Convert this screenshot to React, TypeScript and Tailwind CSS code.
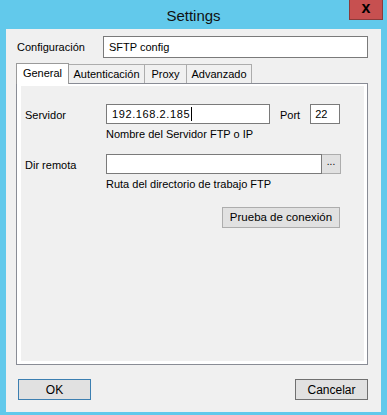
import { useState } from "react";

const TABS = [
  { label: "General", w: "w-[53px]" },
  { label: "Autenticación", w: "w-[76px]" },
  { label: "Proxy", w: "w-[42px]" },
  { label: "Advanzado", w: "w-[65px]" },
];

export default function App() {
  const [active, setActive] = useState("General");

  return (
    <div
      className="w-[387px] h-[415px] bg-[#62c9eb] flex flex-col text-[11px] text-black overflow-hidden"
      style={{ fontFamily: '"Liberation Sans", Arial, sans-serif' }}
    >
      {/* Title bar */}
      <div className="h-[29px] shrink-0 grid grid-cols-[1fr_auto_1fr]">
        <div />
        <div className="pt-[5px] text-[15px] text-[#111]">Settings</div>
        <div className="flex justify-end pr-[4px]">
          <button className="w-[34px] h-[20px] bg-[#c75050] border border-[#8a3b3b] border-t-0 flex items-center justify-center text-[16px] font-bold leading-none pb-[3px]">
            x
          </button>
        </div>
      </div>

      {/* Client area */}
      <div className="flex-1 mx-[6px] mb-[3px] bg-[#f0f0f0] flex flex-col pl-[10px] pr-[13px]">
        {/* Config name */}
        <div className="flex items-center mt-[7px] h-[22px]">
          <span className="w-[87px] pl-[1px]">Configuración</span>
          <div className="flex-1 h-[22px] bg-white border border-[#7a7a7a] flex items-center px-[5px]">
            SFTP config
          </div>
        </div>

        {/* Tabs */}
        <div className="mt-[5px] flex items-end h-[20px]">
          {TABS.map((t) =>
            t.label === active ? (
              <button
                key={t.label}
                onClick={() => setActive(t.label)}
                className={`${t.w} h-[21px] bg-white border border-b-0 border-[#9a9a9a] relative z-10 -mb-[1px] pb-[2px]`}
              >
                {t.label}
              </button>
            ) : (
              <button
                key={t.label}
                onClick={() => setActive(t.label)}
                className={`${t.w} h-[19px] bg-[#f0f0f0] border border-b-0 border-l-0 border-[#acacac]`}
              >
                {t.label}
              </button>
            )
          )}
        </div>

        {/* Tab page */}
        <div className="h-[282px] border border-[#898c95] bg-white pl-[4px] pr-[3px] pt-[2px] pb-[3px] flex">
          <div className="flex-1 bg-[#f0f0f0] flex flex-col pl-[4px]">
            {/* Servidor */}
            <div className="flex items-start mt-[18px]">
              <span className="w-[81px] pt-[3px]">Servidor</span>
              <div className="flex flex-col">
                <div className="w-[164px] h-[20px] bg-white border border-[#7a7a7a] flex items-center pl-[5px] tracking-[0.6px]">
                  192.168.2.185
                  <span className="w-px h-[14px] bg-black ml-[1px]" />
                </div>
                <span className="mt-[2px]">Nombre del Servidor FTP o IP</span>
              </div>
              <span className="ml-[10px] pt-[3px]">Port</span>
              <div className="ml-[10px] w-[30px] h-[20px] bg-white border border-[#7a7a7a] flex items-center pl-[4px]">
                22
              </div>
            </div>

            {/* Dir remota */}
            <div className="flex items-start mt-[11px]">
              <span className="w-[81px] pt-[3px]">Dir remota</span>
              <div className="flex flex-col">
                <div className="flex">
                  <div className="w-[216px] h-[20px] bg-white border border-[#7a7a7a]" />
                  <button className="w-[19px] h-[20px] bg-[#e1e1e1] border border-[#adadad] border-l-0 text-[10px] leading-none pb-[4px]">
                    ...
                  </button>
                </div>
                <span className="mt-[2px]">Ruta del directorio de trabajo FTP</span>
              </div>
            </div>

            {/* Test connection */}
            <div className="flex mt-[15px] pl-[197px]">
              <button className="w-[118px] h-[21px] bg-[#e1e1e1] border border-[#adadad] text-[11.5px]">
                Prueba de conexión
              </button>
            </div>
          </div>
        </div>

        {/* Footer buttons */}
        <div className="flex justify-between mt-[14px] pl-[2px]">
          <button className="w-[73px] h-[21px] bg-[#e1e1e1] border border-[#3c7fb1] text-[12px]">
            OK
          </button>
          <button className="w-[73px] h-[21px] bg-[#e1e1e1] border border-[#707070] text-[12px]">
            Cancelar
          </button>
        </div>
      </div>
    </div>
  );
}
